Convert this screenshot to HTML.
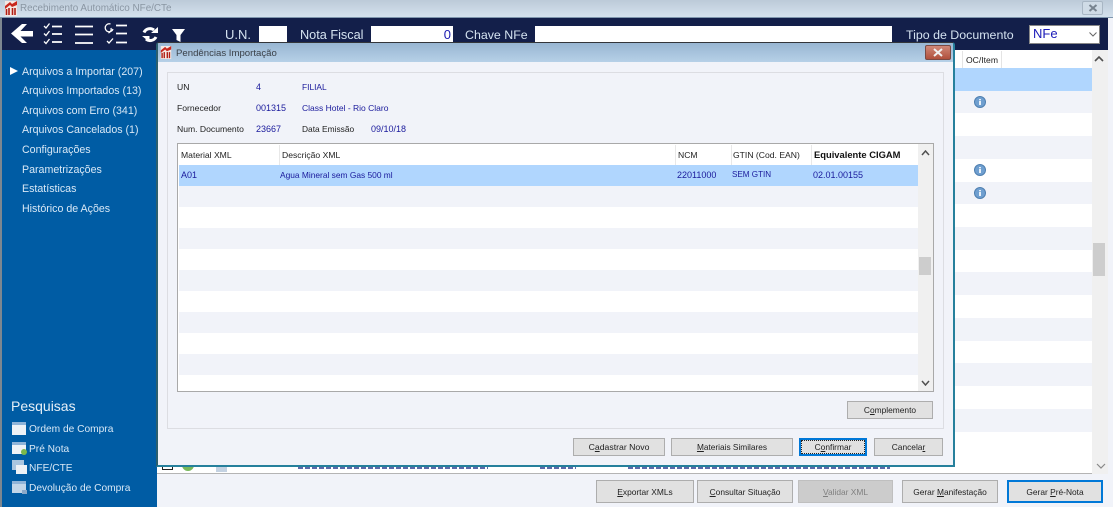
<!DOCTYPE html>
<html><head><meta charset="utf-8">
<style>
*{box-sizing:border-box}
html,body{margin:0;padding:0}
body{width:1113px;height:507px;position:relative;overflow:hidden;background:#f1f3f9;font-family:"Liberation Sans",sans-serif;color:#222}
.a{position:absolute;white-space:nowrap}
.t{font-size:8.6px;line-height:12px}
.d{font-size:9px}
.b{color:#1a1a9c}
.m{font-size:10.65px;line-height:14px;color:#d8e8f6}
.s{font-size:10.2px}
.h{font-size:12.7px;line-height:18px;color:#d4e2f0}
.btn{position:absolute;background:#e1e1e1;border:1px solid #adadad;font-size:8.4px;text-align:center;color:#222}
.p{height:2px;background:repeating-linear-gradient(90deg,#27358c 0 5px,transparent 5px 7px);opacity:.75}
u{text-decoration:underline}
</style></head><body>
<!-- title -->
<div class="a" style="left:0;top:0;width:1113px;height:18px;background:linear-gradient(#bccad8,#d6e3ef)"></div>
<svg class="a" style="left:5px;top:1px" width="12" height="15" viewBox="0 0 12 15"><rect width="12" height="15" fill="#f4e8e4"/><path d="M0 5L5 1L7 3L12 0V4L7 6L5 4L0 8Z" fill="#c8281e"/><path d="M1.5 8v6M4 7v7M7.5 7v7M10 7v7" stroke="#b01e14" stroke-width="1.6"/></svg>
<div class="a" style="left:20px;top:2px;font-size:9.9px;line-height:14px;color:#8a96a3">Recebimento Automático NFe/CTe</div>
<div class="a" style="left:1082px;top:1px;width:21px;height:14px;border:1px solid #a8b6c4;border-radius:2px;background:#cfdbe6"><svg style="position:absolute;left:5px;top:2px" width="10" height="8"><path d="M1.5 1L8.5 7M8.5 1L1.5 7" stroke="#77838f" stroke-width="2"/></svg></div>
<!-- dark bar -->
<div class="a" style="left:0;top:17px;width:1113px;height:1px;background:#7f97ae"></div>
<div class="a" style="left:2px;top:18px;width:1106px;height:32px;background:#131f4a"></div>
<div class="a" style="left:0;top:18px;width:2px;height:489px;background:#7d8790"></div>
<svg class="a" style="left:0;top:18px" width="200" height="30" viewBox="0 0 200 30">
<path d="M11 15.5L22 6H27L20.500 13H33V18.500H20.500L27 25H22Z" fill="#fff"/>
<g stroke="#fff" fill="none" stroke-width="1.7">
<path d="M52 8.500H62M52 16H62M52 24H62"/>
<path d="M44 8L46 10L49.500 5.500M44 15.500L46 17.500L49.500 13M44 23.500L46 25.500L49.500 21" stroke-width="1.3"/>
<path d="M75 8.500H93M75 16.500H93M75 25H93"/>
<path d="M116 7.500H127M116 15.500H127M116 24.500H127"/>
<path d="M110.500 6a4 4 0 1 0 2.500 5M108.500 15a4 4 0 0 0 2.500-5" stroke-width="1.300"/>
<path d="M107 23L109 25L113 20.500" stroke-width="1.300"/>
<path d="M144 14.500A6.500 6.500 0 0 1 154 12" stroke-width="3"/>
<path d="M156 19A6.500 6.500 0 0 1 146 21" stroke-width="3"/>
</g>
<path d="M151 15H158V9Z" fill="#fff"/>
<path d="M142 18H149.500V24Z" fill="#fff"/>
<path d="M172 11H185L180.500 17V24L176.500 22V17Z" fill="#fff"/>
</svg>
<div class="a h" style="left:225px;top:26px;font-size:13px">U.N.</div>
<div class="a" style="left:259px;top:26px;width:28px;height:16px;background:#fff"></div>
<div class="a h" style="left:300px;top:26px">Nota Fiscal</div>
<div class="a" style="left:371px;top:26px;width:82px;height:16px;background:#fff;color:#1a1ab0;font-size:13px;line-height:18px;text-align:right;padding-right:2px">0</div>
<div class="a h" style="left:465px;top:26px;font-size:12.400px">Chave NFe</div>
<div class="a" style="left:535px;top:26px;width:357px;height:16px;background:#fff"></div>
<div class="a h" style="left:906px;top:26px;font-size:12.400px">Tipo de Documento</div>
<div class="a" style="left:1029px;top:25px;width:71px;height:19px;background:#fff;border:1px solid #888;color:#1a1ab8;font-size:13px;line-height:16px;padding-left:3px">NFe<svg class="a" style="left:59px;top:6px" width="8" height="5"><path d="M0.500 0.500L4 4L7.500 0.500" stroke="#666" fill="none"/></svg></div>
<!-- sidebar -->
<div class="a" style="left:2px;top:50px;width:155px;height:457px;background:#005ca4"></div>
<div class="a" style="left:10px;top:67px;width:0;height:0;border-left:8px solid #fff;border-top:4px solid transparent;border-bottom:4px solid transparent"></div>
<div class="a m" style="left:22px;top:65px">Arquivos a Importar (207)</div>
<div class="a m" style="left:22px;top:84px">Arquivos Importados (13)</div>
<div class="a m" style="left:22px;top:104px">Arquivos com Erro (341)</div>
<div class="a m" style="left:22px;top:123px">Arquivos Cancelados (1)</div>
<div class="a m" style="left:22px;top:143px">Configurações</div>
<div class="a m" style="left:22px;top:163px">Parametrizações</div>
<div class="a m" style="left:22px;top:182px">Estatísticas</div>
<div class="a m" style="left:22px;top:202px">Histórico de Ações</div>
<div class="a" style="left:11px;top:397px;font-size:14px;line-height:18px;color:#e6eff7">Pesquisas</div>
<div class="a" style="left:12px;top:422px;width:14px;height:13px;background:#eef2f6;border-top:3px solid #8fb4d8"></div>
<div class="a" style="left:12px;top:442px;width:14px;height:12px;background:#eef2f6;border-top:3px solid #8fb4d8"></div>
<div class="a" style="left:21px;top:449px;width:6px;height:6px;border-radius:50%;background:#7cb84a"></div>
<div class="a" style="left:12px;top:460px;width:12px;height:10px;background:#a9c6e0"></div>
<div class="a" style="left:16px;top:465px;width:11px;height:9px;background:#eef2f6"></div>
<div class="a" style="left:12px;top:481px;width:14px;height:12px;background:#c2d6e8;border-top:3px solid #8fb4d8"></div>
<div class="a" style="left:22px;top:490px;width:5px;height:4px;background:#8aa8c8"></div>
<div class="a m s" style="left:29px;top:423px">Ordem de Compra</div>
<div class="a m s" style="left:29px;top:443px">Pré Nota</div>
<div class="a m s" style="left:29px;top:462px">NFE/CTE</div>
<div class="a m s" style="left:29px;top:482px">Devolução de Compra</div>
<!-- background table -->
<div class="a" style="left:157px;top:50px;width:951px;height:424px;background:#fff;border-bottom:1px solid #b4b4b4"></div>
<div class="a" style="left:955px;top:68px;width:137px;height:23px;background:#b0d6fe"></div>
<div class="a" style="left:955px;top:91px;width:137px;height:22px;background:#f1f3f9"></div>
<div class="a" style="left:955px;top:136px;width:137px;height:23px;background:#f1f3f9"></div>
<div class="a" style="left:955px;top:182px;width:137px;height:22px;background:#f1f3f9"></div>
<div class="a" style="left:955px;top:227px;width:137px;height:23px;background:#f1f3f9"></div>
<div class="a" style="left:955px;top:272px;width:137px;height:23px;background:#f1f3f9"></div>
<div class="a" style="left:955px;top:318px;width:137px;height:23px;background:#f1f3f9"></div>
<div class="a" style="left:955px;top:363px;width:137px;height:23px;background:#f1f3f9"></div>
<div class="a" style="left:955px;top:409px;width:137px;height:23px;background:#f1f3f9"></div>
<div class="a" style="left:962px;top:51px;width:1px;height:17px;background:#e4e4e4"></div>
<div class="a" style="left:1001px;top:51px;width:1px;height:17px;background:#e4e4e4"></div>
<div class="a t" style="left:966px;top:54px;color:#222">OC/Item</div>
<div class="a" style="left:1092px;top:50px;width:16px;height:424px;background:#f0f0f0"></div>
<div class="a" style="left:1093px;top:243px;width:12px;height:33px;background:#cdcdcd"></div>
<svg class="a" style="left:1094px;top:56px" width="10" height="6"><path d="M1 5L5 1L9 5" stroke="#505050" stroke-width="1.600" fill="none"/></svg>
<svg class="a" style="left:1096px;top:463px" width="10" height="6"><path d="M1 1L5 5L9 1" stroke="#888" stroke-width="1.200" fill="none"/></svg>
<svg class="a" style="left:974px;top:96px" width="12" height="12"><circle cx="6" cy="6" r="5.500" fill="#6f9fd0" stroke="#4f7fb0"/><rect x="5" y="5" width="2" height="4" fill="#e8f0f8"/><rect x="5" y="3" width="2" height="1.300" fill="#e8f0f8"/></svg>
<svg class="a" style="left:974px;top:164px" width="12" height="12"><circle cx="6" cy="6" r="5.500" fill="#6f9fd0" stroke="#4f7fb0"/><rect x="5" y="5" width="2" height="4" fill="#e8f0f8"/><rect x="5" y="3" width="2" height="1.300" fill="#e8f0f8"/></svg>
<svg class="a" style="left:974px;top:187px" width="12" height="12"><circle cx="6" cy="6" r="5.500" fill="#6f9fd0" stroke="#4f7fb0"/><rect x="5" y="5" width="2" height="4" fill="#e8f0f8"/><rect x="5" y="3" width="2" height="1.300" fill="#e8f0f8"/></svg>
<!-- bottom row peek -->
<div class="a" style="left:162px;top:466px;width:11px;height:4px;border:1px solid #222;border-top:0;background:#fff"></div>
<div class="a" style="left:182px;top:464px;width:12px;height:7px;border-radius:0 0 6px 6px;background:#77b85a"></div>
<div class="a" style="left:216px;top:466px;width:11px;height:6px;background:#c4d2e2"></div>
<div class="a p" style="left:298px;top:467px;width:190px"></div>
<div class="a p" style="left:540px;top:467px;width:36px"></div>
<div class="a p" style="left:628px;top:467px;width:262px"></div>
<!-- bottom buttons -->
<div class="btn" style="left:596px;top:480px;width:98px;height:23px;line-height:22px"><u>E</u>xportar XMLs</div>
<div class="btn" style="left:697px;top:480px;width:96px;height:23px;line-height:22px"><u>C</u>onsultar Situação</div>
<div class="btn" style="left:798px;top:480px;width:95px;height:23px;line-height:22px;background:#ccc;border-color:#bfbfbf;color:#808080"><u>V</u>alidar XML</div>
<div class="btn" style="left:902px;top:480px;width:96px;height:23px;line-height:22px">Gerar <u>M</u>anifestação</div>
<div class="btn" style="left:1007px;top:480px;width:96px;height:23px;line-height:20px;border:2px solid #0078d7">Gerar <u>P</u>ré-Nota</div>
<!-- dialog -->
<div class="a" style="left:156px;top:42px;width:799px;height:425px;background:#f1f3f9;border:1px solid #33363a;border-right:2px solid #26809c;border-bottom:2px solid #26809c;border-left:2px solid #2b5f6e;border-radius:3px 3px 0 0"></div>
<div class="a" style="left:158px;top:43px;width:795px;height:19px;background:linear-gradient(#98b6d2,#b6d0e7);border-radius:2px 2px 0 0"></div>
<svg class="a" style="left:160px;top:46px" width="12" height="13" viewBox="0 0 12 15"><rect width="12" height="15" fill="#f4e8e4"/><path d="M0 5L5 1L7 3L12 0V4L7 6L5 4L0 8Z" fill="#c8281e"/><path d="M1.500 8v6M4 7v7M7.500 7v7M10 7v7" stroke="#b01e14" stroke-width="1.600"/></svg>
<div class="a" style="left:176px;top:47px;font-size:9.600px;line-height:14px;color:#3a4048">Pendências Importação</div>
<div class="a" style="left:925px;top:45px;width:26px;height:15px;background:linear-gradient(#d08878,#b0503c);border:1px solid #7a4a44;border-radius:2px"><svg style="position:absolute;left:7px;top:2px" width="10" height="9"><path d="M1 1L9 8M9 1L1 8" stroke="#f0f0f0" stroke-width="2"/></svg></div>
<div class="a" style="left:167px;top:72px;width:777px;height:357px;border:1px solid #dcdde2"></div>
<div class="a t" style="left:177px;top:81px">UN</div>
<div class="a t b d" style="left:256px;top:81px">4</div>
<div class="a t b" style="left:302px;top:81px;font-size:8.400px">FILIAL</div>
<div class="a t" style="left:177px;top:102px">Fornecedor</div>
<div class="a t b d" style="left:256px;top:102px">001315</div>
<div class="a t b" style="left:302px;top:102px;font-size:8.500px">Class Hotel - Rio Claro</div>
<div class="a t" style="left:177px;top:123px">Num. Documento</div>
<div class="a t b d" style="left:256px;top:123px">23667</div>
<div class="a t" style="left:302px;top:123px;font-size:8.400px">Data Emissão</div>
<div class="a t b d" style="left:371px;top:123px">09/10/18</div>
<!-- grid -->
<div class="a" style="left:177px;top:143px;width:757px;height:249px;background:#fff;border:1px solid #a9a9a9"></div>
<div class="a" style="left:179px;top:165px;width:739px;height:21px;background:#b0d6fe"></div>
<div class="a" style="left:179px;top:186px;width:739px;height:21px;background:#f1f3f9"></div>
<div class="a" style="left:179px;top:228px;width:739px;height:21px;background:#f1f3f9"></div>
<div class="a" style="left:179px;top:270px;width:739px;height:21px;background:#f1f3f9"></div>
<div class="a" style="left:179px;top:312px;width:739px;height:21px;background:#f1f3f9"></div>
<div class="a" style="left:179px;top:354px;width:739px;height:21px;background:#f1f3f9"></div>
<div class="a" style="left:279px;top:145px;width:1px;height:20px;background:#e8e8e8"></div>
<div class="a" style="left:675px;top:145px;width:1px;height:20px;background:#e8e8e8"></div>
<div class="a" style="left:731px;top:145px;width:1px;height:20px;background:#e8e8e8"></div>
<div class="a" style="left:811px;top:145px;width:1px;height:20px;background:#e8e8e8"></div>
<div class="a t" style="left:181px;top:149px">Material XML</div>
<div class="a t" style="left:282px;top:149px">Descrição XML</div>
<div class="a t" style="left:678px;top:149px">NCM</div>
<div class="a t" style="left:733px;top:149px">GTIN (Cod. EAN)</div>
<div class="a t" style="left:814px;top:149px;font-weight:bold;font-size:9.400px;color:#111">Equivalente CIGAM</div>
<div class="a t b d" style="left:181px;top:169px">A01</div>
<div class="a t b" style="left:280px;top:169px;font-size:8.400px">Agua Mineral sem Gas 500 ml</div>
<div class="a t b d" style="left:677px;top:169px">22011000</div>
<div class="a t b" style="left:732px;top:169px;font-size:8.100px">SEM GTIN</div>
<div class="a t b d" style="left:813px;top:169px">02.01.00155</div>
<div class="a" style="left:918px;top:144px;width:15px;height:247px;background:#f0f0f0"></div>
<div class="a" style="left:919px;top:257px;width:12px;height:18px;background:#cdcdcd"></div>
<svg class="a" style="left:921px;top:150px" width="9" height="6"><path d="M1 5L4.500 1L8 5" stroke="#505050" stroke-width="1.500" fill="none"/></svg>
<svg class="a" style="left:921px;top:380px" width="9" height="6"><path d="M1 1L4.500 5L8 1" stroke="#505050" stroke-width="1.500" fill="none"/></svg>
<!-- dialog buttons -->
<div class="btn" style="left:847px;top:401px;width:86px;height:18px;line-height:16px">C<u>o</u>mplemento</div>
<div class="btn" style="left:573px;top:438px;width:92px;height:18px;line-height:16px;font-size:8.700px">C<u>a</u>dastrar Novo</div>
<div class="btn" style="left:671px;top:438px;width:122px;height:18px;line-height:16px;font-size:8.300px"><u>M</u>ateriais Similares</div>
<div class="btn" style="left:799px;top:438px;width:68px;height:18px;line-height:14px;border:2px solid #0078d7;outline:1px dotted #222;outline-offset:-3px">C<u>o</u>nfirmar</div>
<div class="btn" style="left:874px;top:438px;width:69px;height:18px;line-height:16px">Cancela<u>r</u></div>
</body></html>
